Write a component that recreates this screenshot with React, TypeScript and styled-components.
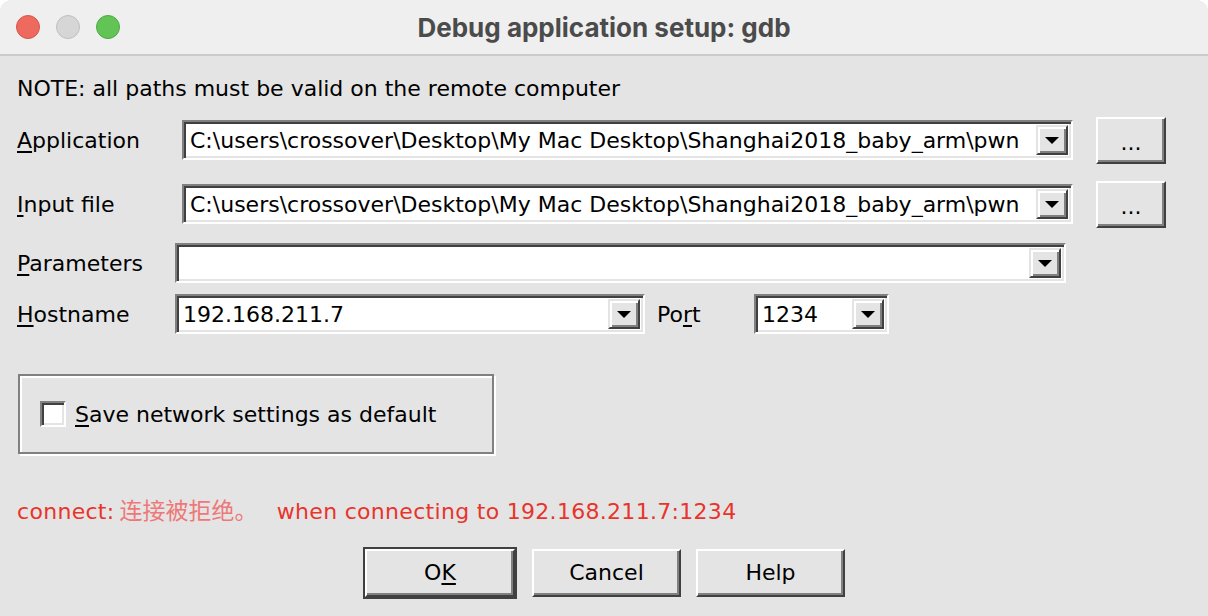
import { createGlobalStyle, styled } from 'styled-components'

const GlobalStyle = createGlobalStyle`
  html, body {
    margin: 0;
    padding: 0;
    background: #ffffff;
  }
`

const Window = styled.div`
  width: 1208px;
  height: 616px;
  background: #e4e4e4;
  border-radius: 12px 12px 0 0;
  overflow: hidden;
  display: flex;
  flex-direction: column;
  font-family: 'DejaVu Sans', Verdana, sans-serif;
  font-size: 22px;
  color: #000;
`

const TitleBar = styled.div`
  height: 54px;
  flex-shrink: 0;
  background: #efefef;
  border-bottom: 2px solid #cbcbcb;
  display: grid;
  grid-template-columns: 1fr auto 1fr;
  align-items: center;
`

const Lights = styled.div`
  display: flex;
  gap: 16px;
  padding-left: 16px;
`

const Light = styled.span<{ $fill: string; $edge: string }>`
  width: 24px;
  height: 24px;
  box-sizing: border-box;
  border-radius: 50%;
  background: ${p => p.$fill};
  border: 1px solid ${p => p.$edge};
`

const Title = styled.div`
  font-family: Inter, 'Open Sans', sans-serif;
  font-weight: 700;
  font-size: 26px;
  color: #4b4b4b;
`

const Content = styled.div`
  display: flex;
  flex-direction: column;
  padding: 0 17px;
`

const Note = styled.div`
  margin-top: 20px;
  line-height: 26px;
  white-space: nowrap;
`

const Row = styled.div<{ $h: number; $mt: number }>`
  display: flex;
  align-items: center;
  height: ${p => p.$h}px;
  margin-top: ${p => p.$mt}px;
`

const Label = styled.div<{ $w: number }>`
  width: ${p => p.$w}px;
  flex-shrink: 0;
  white-space: nowrap;
`

const Key = styled.span`
  text-decoration: underline;
  text-underline-offset: 3px;
  text-decoration-thickness: 2px;
`

const Combo = styled.div<{ $w: number }>`
  width: ${p => p.$w}px;
  height: 40px;
  flex-shrink: 0;
  box-sizing: border-box;
  background: #fff;
  border: 2px solid;
  border-color: #808080 #fff #fff #808080;
  box-shadow: inset 2px 2px 0 #404040, inset -2px -2px 0 #e4e4e4;
  display: flex;
  align-items: center;
  padding: 0 3px 0 6px;
`

const ComboValue = styled.div`
  flex: 1;
  overflow: hidden;
  white-space: nowrap;
`

const DropButton = styled.div`
  width: 32px;
  height: 30px;
  box-sizing: border-box;
  background: #e4e4e4;
  border: 2px solid;
  border-color: #e4e4e4 #404040 #404040 #e4e4e4;
  box-shadow: inset 2px 2px 0 #fff, inset -2px -2px 0 #808080;
  display: flex;
  align-items: center;
  justify-content: center;
  flex-shrink: 0;
`

const Arrow = styled.span`
  width: 0;
  height: 0;
  border-left: 7px solid transparent;
  border-right: 7px solid transparent;
  border-top: 7px solid #000;
  margin-top: 1px;
`

const Button = styled.div<{ $w: number; $h: number }>`
  width: ${p => p.$w}px;
  height: ${p => p.$h}px;
  box-sizing: border-box;
  background: #e4e4e4;
  border: 2px solid;
  border-color: #fff #404040 #404040 #fff;
  box-shadow: inset -2px -2px 0 #808080;
  display: flex;
  align-items: center;
  justify-content: center;
  flex-shrink: 0;
  padding-bottom: 1px;
`

const DefaultFrame = styled.div`
  border: 2px solid #404040;
  display: flex;
`

const Browse = styled(Button)`
  margin-left: 23px;
  padding: 4px 0 0;
`

const PortLabel = styled(Label)`
  margin-left: 12px;
`

const Group = styled.div`
  width: 476px;
  height: 80px;
  box-sizing: border-box;
  margin: 40px 0 0 1px;
  border: 2px solid #808080;
  box-shadow: inset 2px 2px 0 #fff, 2px 2px 0 #fff;
  display: flex;
  align-items: center;
  padding-left: 20px;
`

const Check = styled.div`
  width: 26px;
  height: 26px;
  box-sizing: border-box;
  background: #fff;
  border: 2px solid;
  border-color: #808080 #fff #fff #808080;
  box-shadow: inset 2px 2px 0 #404040, inset -2px -2px 0 #e4e4e4;
`

const CheckLabel = styled.span`
  margin-left: 9px;
  white-space: nowrap;
`

const ErrorLine = styled.div`
  margin-top: 42px;
  line-height: 26px;
  color: #e8342b;
  white-space: nowrap;
  letter-spacing: 0.3px;
`

const Cjk = styled.span`
  font-family: 'Noto Sans CJK SC', sans-serif;
  font-size: 23px;
  letter-spacing: 0;
  color: #ee7878;
  margin: 0 12px 0 5px;
`

const ButtonRow = styled.div`
  margin-top: 22px;
  display: flex;
  justify-content: center;
  align-items: center;
  gap: 15px;
`

const PATH = 'C:\\users\\crossover\\Desktop\\My Mac Desktop\\Shanghai2018_baby_arm\\pwn'

function ComboBox({ w, value }: { w: number; value: string }) {
  return (
    <Combo $w={w}>
      <ComboValue>{value}</ComboValue>
      <DropButton>
        <Arrow />
      </DropButton>
    </Combo>
  )
}

export default function App() {
  return (
    <>
      <GlobalStyle />
      <Window>
        <TitleBar>
          <Lights>
            <Light $fill="#ee6a5e" $edge="#d5574c" />
            <Light $fill="#d6d6d6" $edge="#bfbfbf" />
            <Light $fill="#61c454" $edge="#4ea944" />
          </Lights>
          <Title>Debug application setup: gdb</Title>
          <span />
        </TitleBar>
        <Content>
          <Note>NOTE: all paths must be valid on the remote computer</Note>
          <Row $h={48} $mt={14}>
            <Label $w={165}>
              <Key>A</Key>pplication
            </Label>
            <ComboBox w={891} value={PATH} />
            <Browse $w={70} $h={47}>...</Browse>
          </Row>
          <Row $h={48} $mt={16}>
            <Label $w={165}>
              <Key>I</Key>nput file
            </Label>
            <ComboBox w={891} value={PATH} />
            <Browse $w={70} $h={47}>...</Browse>
          </Row>
          <Row $h={40} $mt={15}>
            <Label $w={158}>
              <Key>P</Key>arameters
            </Label>
            <ComboBox w={891} value="" />
          </Row>
          <Row $h={40} $mt={11}>
            <Label $w={158}>
              <Key>H</Key>ostname
            </Label>
            <ComboBox w={470} value="192.168.211.7" />
            <PortLabel $w={97}>
              Po<Key>r</Key>t
            </PortLabel>
            <ComboBox w={135} value="1234" />
          </Row>
          <Group>
            <Check />
            <CheckLabel>
              <Key>S</Key>ave network settings as default
            </CheckLabel>
          </Group>
          <ErrorLine>
            connect:<Cjk>连接被拒绝。</Cjk> when connecting to 192.168.211.7:1234
          </ErrorLine>
          <ButtonRow>
            <DefaultFrame>
              <Button $w={150} $h={48}>
                O<Key>K</Key>
              </Button>
            </DefaultFrame>
            <Button $w={149} $h={48}>Cancel</Button>
            <Button $w={149} $h={48}>Help</Button>
          </ButtonRow>
        </Content>
      </Window>
    </>
  )
}
